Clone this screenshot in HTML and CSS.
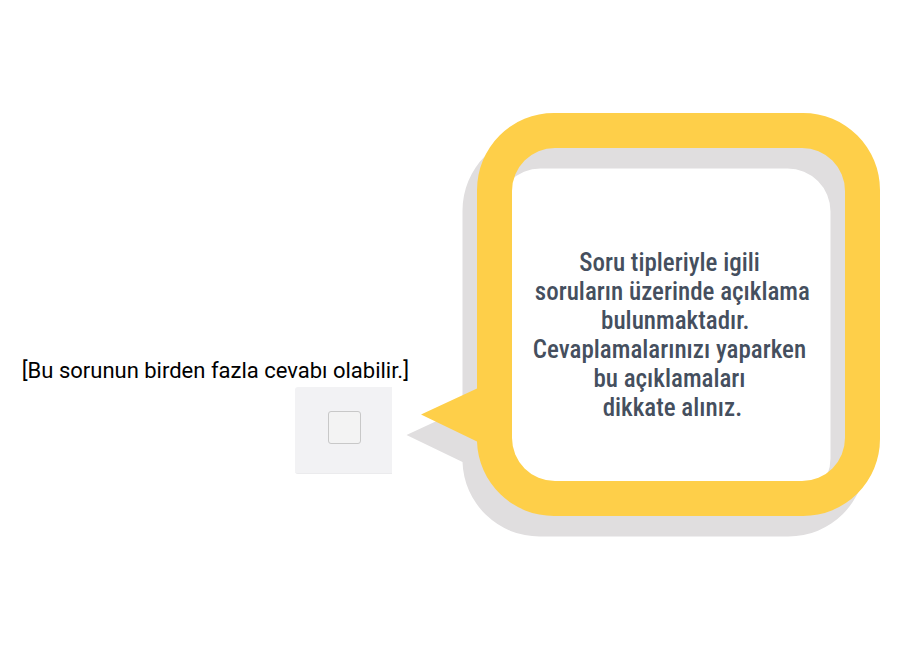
FILE: index.html
```
<!DOCTYPE html>
<html lang="tr">
<head>
<meta charset="utf-8">
<meta name="viewport" content="width=device-width, initial-scale=1">
<title>Soru tipleri</title>
<link rel="stylesheet" href="styles.css">
</head>
<body>
<main class="guide">
  <section class="question">
    <label class="question-note" for="answer">[Bu sorunun birden fazla cevabı olabilir.]</label>
    <div class="answer-cell"><input class="answer-box" type="checkbox" id="answer"></div>
  </section>
  <aside class="callout">
    <svg class="bubble" viewBox="0 0 472 424" aria-hidden="true">
      <defs>
        <path id="frame" fill-rule="evenodd" d="M145 0H394A77 77 0 0 1 471 77V326A77 77 0 0 1 394 403H145A77 77 0 0 1 68 328.500L12 301.500L68 275.500V77A77 77 0 0 1 145 0ZM146 35A43 43 0 0 0 103 78V325A43 43 0 0 0 146 368H393A43 43 0 0 0 436 325V78A43 43 0 0 0 393 35Z"/>
      </defs>
      <use class="bubble-shadow" href="#frame" x="-14.500" y="20.500"/>
      <use class="bubble-frame" href="#frame"/>
    </svg>
    <p class="callout-text">Soru tipleriyle igili<br>&nbsp;soruların üzerinde açıklama<br>&nbsp;&nbsp;bulunmaktadır.<br>Cevaplamalarınızı yaparken<br>bu açıklamaları<br>&nbsp;dikkate alınız.</p>
  </aside>
</main>
</body>
</html>
```
FILE: styles.css
```
* {
  box-sizing: border-box;
}

body {
  margin: 0;
  background: #fff;
  font-family: Roboto, "Liberation Sans", sans-serif;
}

.guide {
  display: flex;
  justify-content: flex-end;
  align-items: flex-start;
  padding: 113px 19px 0 0;
}

.question {
  display: flex;
  flex-direction: column;
  align-items: flex-end;
  padding-top: 244px;
}

.question-note {
  font-size: 22px;
  line-height: 28px;
  color: #000;
  white-space: nowrap;
}

.answer-cell {
  display: grid;
  place-items: center;
  width: 97px;
  height: 87px;
  margin: 2px 17px 0 0;
  padding: 0 0 6px 2px;
  background: #f2f2f4;
  border-bottom: 1px solid #ebebed;
  border-radius: 3px 0 0 3px;
}

.answer-box {
  appearance: none;
  width: 33px;
  height: 33px;
  margin: 0;
  border: 1px solid #c8c8c8;
  border-radius: 3px;
  background: #f3f3f3;
}

.answer-box:checked {
  background: #fecf49;
}

.callout {
  position: relative;
  flex: none;
  width: 472px;
}

.bubble {
  display: block;
  width: 100%;
  overflow: visible;
}

.bubble-frame {
  fill: #fecf49;
}

.bubble-shadow {
  fill: #e0dedf;
}

.callout-text {
  position: absolute;
  inset: 0 54px 0 103px;
  margin: 0;
  padding-top: 135px;
  font-family: "Roboto Condensed", "Liberation Sans Narrow", Roboto, sans-serif;
  font-size: 25px;
  font-weight: 500;
  line-height: 29px;
  text-align: center;
  white-space: nowrap;
  color: #454f5e;
}
```
